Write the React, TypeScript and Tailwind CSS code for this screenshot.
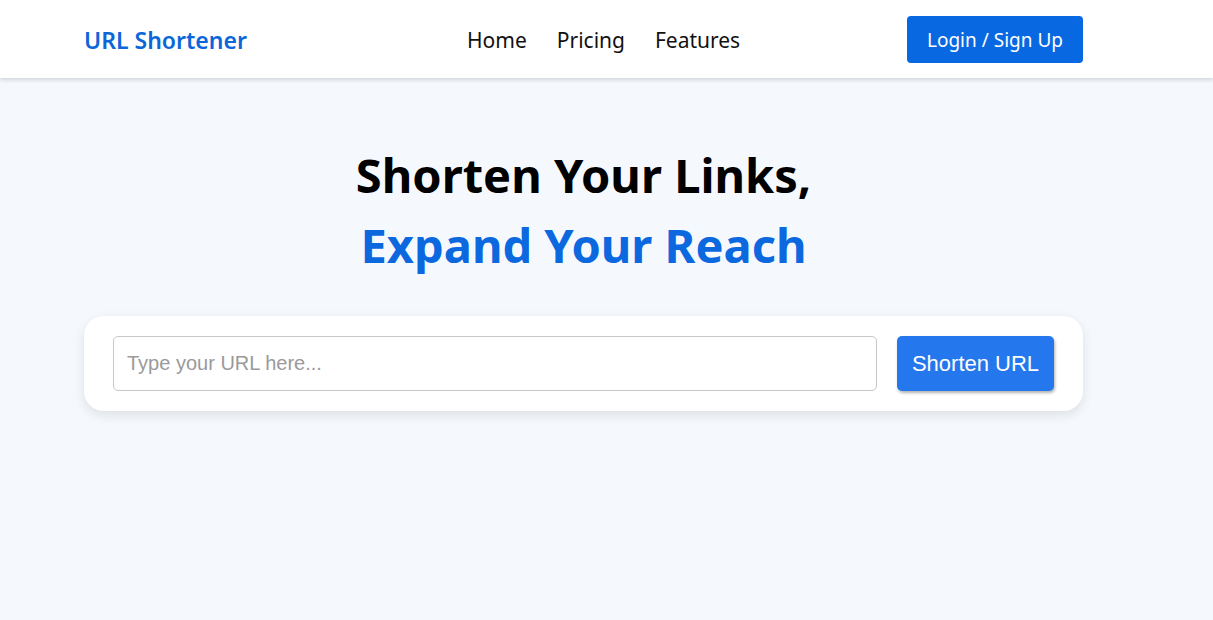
import React, { useState } from 'react';

const App = () => {
  const [url, setUrl] = useState('');

  return (
    <div className="min-h-screen bg-[#f5f9fe] font-['Noto_Sans',sans-serif]">
      {/* Header */}
      <header className="h-[78px] bg-white shadow-[0_2px_4px_rgba(0,0,0,0.15)] relative">
        <div className="ml-[84px] w-[999px] h-full flex items-center">
          <a className="text-[23px] font-semibold text-[#0b67d9] w-[383px] pt-[3px]">URL Shortener</a>
          <nav className="flex items-center gap-[30px] text-[21px] text-[#111] pt-[3px]">
            <a>Home</a>
            <a>Pricing</a>
            <a>Features</a>
          </nav>
          <button className="ml-auto h-[47px] px-[20px] pt-[3px] bg-[#0868e1] text-white text-[19px] rounded-[4px]">
            Login / Sign Up
          </button>
        </div>
      </header>

      {/* Hero */}
      <main className="ml-[84px] w-[999px] pt-[62px]">
        <h1 className="text-center text-[47px] font-bold leading-[70px] text-black">
          Shorten Your Links,
          <br />
          <span className="text-[#0b68de]">Expand Your Reach</span>
        </h1>

        <div className="mt-[36px] bg-white rounded-[20px] shadow-[0_4px_12px_rgba(0,0,0,0.1)] px-[29px] py-[20px] flex gap-[20px]">
          <input
            value={url}
            onChange={(e) => setUrl(e.target.value)}
            placeholder="Type your URL here..."
            className="flex-1 h-[55px] border border-[#c8c8c8] rounded-[5px] px-[13px] text-[20px] font-['Liberation_Sans',sans-serif] placeholder:text-[#9a9a9a] outline-none"
          />
          <button className="w-[157px] h-[55px] bg-[#2477ec] text-white text-[22px] rounded-[5px] shadow-[1px_2px_3px_rgba(0,0,0,0.3)] font-['Liberation_Sans',sans-serif]">
            Shorten URL
          </button>
        </div>
      </main>
    </div>
  );
};

export default App;
